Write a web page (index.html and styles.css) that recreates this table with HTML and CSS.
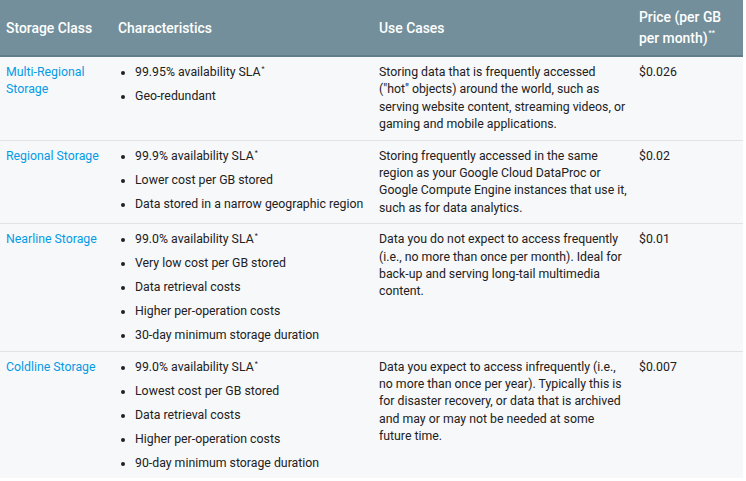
FILE: index.html
```html
<!DOCTYPE html>
<html lang="en">
<head>
    <meta charset="UTF-8">
    <title>Storage Classes</title>
    <link rel="stylesheet" href="styles.css">
</head>
<body>
    <table class="storage-table">
        <colgroup>
            <col class="col-class">
            <col class="col-chars">
            <col class="col-use">
            <col class="col-price">
        </colgroup>
        <thead>
            <tr>
                <th>Storage Class</th>
                <th>Characteristics</th>
                <th>Use Cases</th>
                <th>Price (per GB per month)<sup>**</sup></th>
            </tr>
        </thead>
        <tbody>
            <tr>
                <td><a href="#">Multi-Regional Storage</a></td>
                <td>
                    <ul>
                        <li>99.95% availability SLA<sup>*</sup></li>
                        <li>Geo-redundant</li>
                    </ul>
                </td>
                <td>Storing data that is frequently accessed ("hot" objects) around the world, such as serving website content, streaming videos, or gaming and mobile applications.</td>
                <td>$0.026</td>
            </tr>
            <tr>
                <td><a href="#">Regional Storage</a></td>
                <td>
                    <ul>
                        <li>99.9% availability SLA<sup>*</sup></li>
                        <li>Lower cost per GB stored</li>
                        <li>Data stored in a narrow geographic region</li>
                    </ul>
                </td>
                <td>Storing frequently accessed in the same region as your Google Cloud DataProc or Google Compute Engine instances that use it, such as for data analytics.</td>
                <td>$0.02</td>
            </tr>
            <tr>
                <td><a href="#">Nearline Storage</a></td>
                <td>
                    <ul>
                        <li>99.0% availability SLA<sup>*</sup></li>
                        <li>Very low cost per GB stored</li>
                        <li>Data retrieval costs</li>
                        <li>Higher per-operation costs</li>
                        <li>30-day minimum storage duration</li>
                    </ul>
                </td>
                <td>Data you do not expect to access frequently (i.e., no more than once per month). Ideal for back-up and serving long-tail multimedia content.</td>
                <td>$0.01</td>
            </tr>
            <tr>
                <td><a href="#">Coldline Storage</a></td>
                <td>
                    <ul>
                        <li>99.0% availability SLA<sup>*</sup></li>
                        <li>Lowest cost per GB stored</li>
                        <li>Data retrieval costs</li>
                        <li>Higher per-operation costs</li>
                        <li>90-day minimum storage duration</li>
                    </ul>
                </td>
                <td>Data you expect to access infrequently (i.e., no more than once per year). Typically this is for disaster recovery, or data that is archived and may or may not be needed at some future time.</td>
                <td>$0.007</td>
            </tr>
        </tbody>
    </table>
</body>
</html>
```

FILE: styles.css
```css
body {
    font-family: Roboto, "Noto Sans", sans-serif;
    margin: 0;
    padding: 0;
    background-color: #fff;
    color: #212121;
}
.storage-table {
    width: 743px;
    table-layout: fixed;
    border-collapse: collapse;
    background-color: #f7f8fa;
    font-size: 12.3px;
    line-height: 17.4px;
}
.col-class { width: 112px; }
.col-chars { width: 261px; }
.col-use { width: 260px; }
.col-price { width: 110px; }
.storage-table th {
    background-color: #738f9b;
    color: #fff;
    font-weight: 500;
    font-size: 13.9px;
    line-height: 21px;
    text-align: left;
    vertical-align: middle;
    padding: 7px 6px 6px;
    height: 42px;
    border-bottom: 2px solid #607d8b;
}
.storage-table th sup {
    font-size: 7px;
    vertical-align: top;
    line-height: 10px;
    margin-left: 1px;
}
.storage-table td {
    vertical-align: top;
    padding: 7px 6px 6px;
    border-top: 1px solid #dfe3e6;
}
.storage-table tbody tr:first-child td {
    border-top: none;
}
.storage-table a {
    color: #039be5;
    text-decoration: none;
}
.storage-table ul {
    margin: 0;
    padding-left: 17px;
}
.storage-table li {
    margin-bottom: 6.6px;
}
.storage-table li:last-child {
    margin-bottom: 0;
}
.storage-table li sup {
    font-size: 7px;
    vertical-align: 5px;
    line-height: 0;
    margin-left: 1px;
}
```
